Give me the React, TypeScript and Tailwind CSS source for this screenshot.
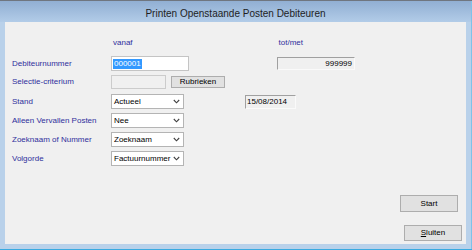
import React from "react";

const labelCls = "w-[99px] shrink-0 text-[8px] leading-[10px] text-[#2f2f9c]";

function Chevron() {
  return (
    <svg width="7" height="5" viewBox="0 0 7 5" className="shrink-0">
      <path d="M0.8 1 L3.5 3.8 L6.2 1" fill="none" stroke="#404040" strokeWidth="1.1" />
    </svg>
  );
}

function Select({ value }: { value: string }) {
  return (
    <div className="flex h-[15px] w-[73px] items-center justify-between border border-[#b4b4b4] bg-white pl-[2px] pr-[3px] text-[8px] leading-[10px] text-black">
      <span>{value}</span>
      <Chevron />
    </div>
  );
}

function Row({ label, children, className = "" }: { label: string; children?: React.ReactNode; className?: string }) {
  return (
    <div className={"flex items-center " + className}>
      <div className={labelCls}>{label}</div>
      {children}
    </div>
  );
}

export default function App() {
  return (
    <div
      className="flex h-[250px] w-[472px] flex-col border-t border-[#6f7680] bg-[#b9d1ea] text-black"
      style={{ fontFamily: '"Liberation Sans", Arial, sans-serif' }}
    >
      <div className="flex h-[21px] shrink-0 items-center justify-center bg-gradient-to-b from-[#91afd3] to-[#b2cce8] border-r border-[#7cc3ea] pt-[4px] text-[10px] text-[#1e1e1e]">
        Printen Openstaande Posten Debiteuren
      </div>
      <div className="flex flex-1 border-r border-[#7cc3ea] px-[5px] pb-[5px]">
        <div className="flex flex-1 flex-col bg-[#f0f0f0] pl-[7px] pt-[16px]">
          <div className="flex text-[8px] leading-[10px] text-[#2f2f9c]">
            <span className="ml-[101px]">vanaf</span>
            <span className="ml-[146px]">tot/met</span>
          </div>

          <Row label="Debiteurnummer" className="mt-[8px] h-[15px]">
            <div className="flex h-[15px] w-[78px] items-center border border-[#c4c4c4] bg-white pl-[1px]">
              <span className="bg-[#3399ff] px-[1px] text-[8px] leading-[10px] text-white">000001</span>
            </div>
            <div className="ml-[88px] flex h-[13px] w-[78px] items-center justify-end border border-t-[#a0a0a0] border-l-[#a0a0a0] border-r-[#fafafa] border-b-[#fafafa] bg-[#f0f0f0] pr-[2px] text-[8px] leading-[10px]">
              999999
            </div>
          </Row>

          <Row label="Selectie-criterium" className="mt-[4px] h-[14px]">
            <div className="h-[14px] w-[55px] border border-[#cccccc] bg-[#f0f0f0]" />
            <button className="ml-[5px] flex h-[12px] w-[54px] items-center justify-center border border-[#adadad] bg-[#e1e1e1] text-[8px] leading-[10px]">
              Rubrieken
            </button>
          </Row>

          <Row label="Stand" className="mt-[5px] h-[15px]">
            <Select value="Actueel" />
            <div className="ml-[61px] flex h-[14px] w-[51px] items-center border border-t-[#a0a0a0] border-l-[#a0a0a0] border-r-[#fafafa] border-b-[#fafafa] bg-[#f0f0f0] pl-[1px] text-[8px] leading-[10px]">
              15/08/2014
            </div>
          </Row>

          <Row label="Alleen Vervallen Posten" className="mt-[4px] h-[15px]">
            <Select value="Nee" />
          </Row>
          <Row label="Zoeknaam of Nummer" className="mt-[4px] h-[15px]">
            <Select value="Zoeknaam" />
          </Row>
          <Row label="Volgorde" className="mt-[4px] h-[15px]">
            <Select value="Factuurnummer" />
          </Row>

          <div className="mt-[29px] flex flex-col items-end">
            <button className="mr-[8px] flex h-[17px] w-[58px] items-center justify-center border border-[#adadad] bg-[#e1e1e1] text-[8px] leading-[10px]">
              Start
            </button>
            <button className="mr-[4px] mt-[13px] flex h-[16px] w-[58px] items-center justify-center border border-[#adadad] bg-[#e1e1e1] text-[8px] leading-[10px]">
              <span>
                <span className="underline">S</span>luiten
              </span>
            </button>
          </div>
        </div>
      </div>
      <div className="h-px shrink-0 bg-[#3aaae0]" />
    </div>
  );
}
